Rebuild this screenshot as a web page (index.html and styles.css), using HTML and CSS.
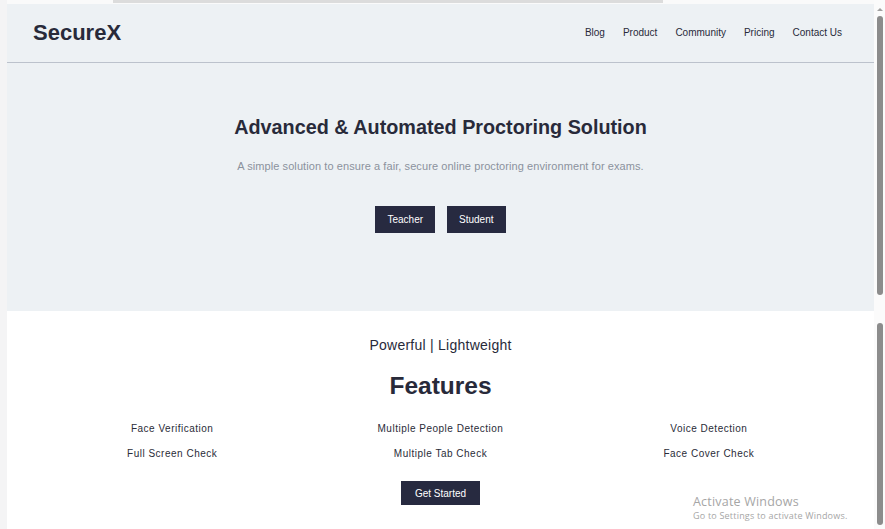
FILE: index.html
```html
<!DOCTYPE html>
<html lang="en">
<head>
<meta charset="utf-8">
<title>SecureX</title>
<link rel="stylesheet" href="styles.css">
</head>
<body>
<div class="window">
  <div class="gutter"></div>
  <div class="page">
    <div class="topstrip"><div class="tabbar"></div></div>
    <section class="hero">
      <header class="header">
        <div class="logo">SecureX</div>
        <nav class="nav">
          <a>Blog</a>
          <a>Product</a>
          <a>Community</a>
          <a>Pricing</a>
          <a>Contact Us</a>
        </nav>
      </header>
      <div class="hero-body">
        <h1 class="hero-title">Advanced &amp; Automated Proctoring Solution</h1>
        <p class="hero-sub">A simple solution to ensure a fair, secure online proctoring environment for exams.</p>
        <div class="hero-actions">
          <button class="btn">Teacher</button>
          <button class="btn">Student</button>
        </div>
      </div>
    </section>
    <section class="features">
      <p class="tagline">Powerful | Lightweight</p>
      <h2 class="features-title">Features</h2>
      <div class="feature-grid">
        <div>Face Verification</div>
        <div>Multiple People Detection</div>
        <div>Voice Detection</div>
        <div>Full Screen Check</div>
        <div>Multiple Tab Check</div>
        <div>Face Cover Check</div>
      </div>
      <button class="btn btn-start">Get Started</button>
    </section>
  </div>
  <div class="scrollbar">
    <div class="arrow"></div>
    <div class="thumb thumb-top"></div>
    <div class="thumb thumb-bottom"></div>
  </div>
  <div class="watermark">
    <div class="wm-title">Activate Windows</div>
    <div class="wm-sub">Go to Settings to activate Windows.</div>
  </div>
</div>
</body>
</html>
```
FILE: styles.css
```css
* { box-sizing: border-box; }
html, body { margin: 0; padding: 0; }
body {
  background: #ffffff;
  font-family: "Liberation Sans", Arial, sans-serif;
  color: #282a3a;
  overflow: hidden;
}
.window {
  position: relative;
  display: flex;
  width: 885px;
  height: 529px;
  overflow: hidden;
}
.gutter {
  width: 7px;
  flex: none;
  background: #f4f4f5;
}
.page {
  width: 867px;
  flex: none;
  display: flex;
  flex-direction: column;
}
.topstrip {
  height: 4px;
  background: #fafafa;
  padding-left: 106px;
}
.tabbar {
  width: 550px;
  height: 3px;
  background: #dcdcdc;
}
.hero {
  background: #edf1f4;
  height: 307px;
}
.header {
  height: 59px;
  border-bottom: 1px solid #bcc2cc;
  display: flex;
  align-items: center;
  justify-content: space-between;
  padding: 0 31px 1px 26px;
}
.logo {
  font-size: 22px;
  font-weight: 700;
  color: #282a3a;
}
.nav {
  display: flex;
  gap: 18px;
  font-size: 10px;
  padding-right: 1px;
}
.nav a { color: #282a3a; }
.hero-body {
  display: flex;
  flex-direction: column;
  align-items: center;
  padding-top: 52px;
}
.hero-title {
  margin: 0;
  font-size: 19.8px;
  font-weight: 700;
  line-height: 24px;
  color: #282a3a;
}
.hero-sub {
  margin: 20px 0 0;
  font-size: 11px;
  line-height: 14px;
  letter-spacing: 0.08px;
  color: #8b919d;
}
.hero-actions {
  display: flex;
  gap: 12px;
  margin-top: 33px;
}
.btn {
  background: #272a40;
  color: #ffffff;
  border: none;
  font-family: "Liberation Sans", Arial, sans-serif;
  font-size: 10px;
  height: 27px;
  padding: 0 12px;
  cursor: pointer;
}
.features {
  display: flex;
  flex-direction: column;
  align-items: center;
  padding: 0 31px;
  background: #ffffff;
}
.tagline {
  margin: 26px 0 0;
  font-size: 14px;
  line-height: 17px;
  letter-spacing: 0.25px;
  color: #282a3a;
}
.features-title {
  margin: 18px 0 0;
  font-size: 24.5px;
  line-height: 28px;
  font-weight: 700;
  color: #282a3a;
}
.feature-grid {
  width: 100%;
  display: grid;
  grid-template-columns: repeat(3, 1fr);
  row-gap: 13px;
  margin-top: 23px;
  font-size: 10px;
  line-height: 12px;
  letter-spacing: 0.5px;
  text-align: center;
  color: #2a2c38;
}
.btn-start {
  margin-top: 21px;
  height: 24px;
  padding: 0 14px;
}
.scrollbar {
  width: 11px;
  flex: none;
  display: flex;
  flex-direction: column;
  align-items: center;
  background: #fbfbfb;
}
.arrow {
  margin-top: 8px;
  width: 0;
  height: 0;
  border-left: 3px solid transparent;
  border-right: 3px solid transparent;
  border-bottom: 3px solid #a0a0a0;
}
.thumb {
  width: 6px;
  background: #8c8c8c;
  border-radius: 3px;
}
.thumb-top {
  margin-top: 5px;
  height: 279px;
}
.thumb-bottom {
  margin-top: 28px;
  height: 202px;
}
.watermark {
  position: absolute;
  left: 693px;
  top: 494px;
  font-family: "Open Sans", "Noto Sans", sans-serif;
  color: #a6a6a6;
}
.wm-title {
  font-size: 12.5px;
  line-height: 16px;
  letter-spacing: 0.2px;
}
.wm-sub {
  font-size: 9px;
  line-height: 12px;
  letter-spacing: 0.2px;
}
```
